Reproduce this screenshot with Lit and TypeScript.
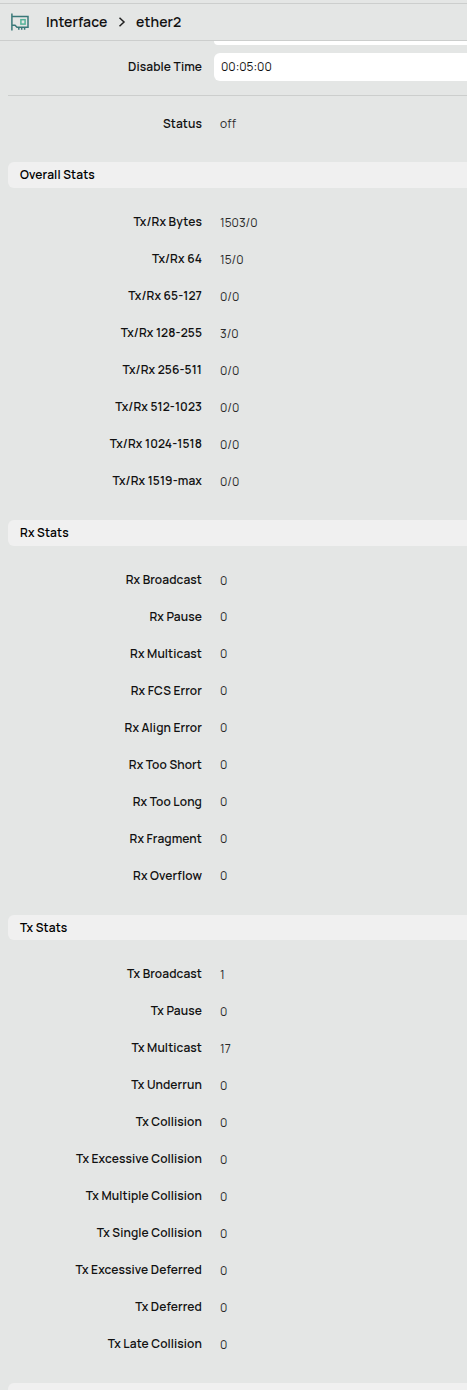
import { LitElement, html, css } from "lit";
import { customElement } from "lit/decorators.js";

type Row = [label: string, value: string];

const sections: { id: string; title: string; rows: Row[] }[] = [
  {
    id: "overall",
    title: "Overall Stats",
    rows: [
      ["Tx/Rx Bytes", "1503/0"],
      ["Tx/Rx 64", "15/0"],
      ["Tx/Rx 65-127", "0/0"],
      ["Tx/Rx 128-255", "3/0"],
      ["Tx/Rx 256-511", "0/0"],
      ["Tx/Rx 512-1023", "0/0"],
      ["Tx/Rx 1024-1518", "0/0"],
      ["Tx/Rx 1519-max", "0/0"],
    ],
  },
  {
    id: "rx",
    title: "Rx Stats",
    rows: [
      ["Rx Broadcast", "0"],
      ["Rx Pause", "0"],
      ["Rx Multicast", "0"],
      ["Rx FCS Error", "0"],
      ["Rx Align Error", "0"],
      ["Rx Too Short", "0"],
      ["Rx Too Long", "0"],
      ["Rx Fragment", "0"],
      ["Rx Overflow", "0"],
    ],
  },
  {
    id: "tx",
    title: "Tx Stats",
    rows: [
      ["Tx Broadcast", "1"],
      ["Tx Pause", "0"],
      ["Tx Multicast", "17"],
      ["Tx Underrun", "0"],
      ["Tx Collision", "0"],
      ["Tx Excessive Collision", "0"],
      ["Tx Multiple Collision", "0"],
      ["Tx Single Collision", "0"],
      ["Tx Excessive Deferred", "0"],
      ["Tx Deferred", "0"],
      ["Tx Late Collision", "0"],
    ],
  },
];

@customElement("app-root")
export class AppRoot extends LitElement {
  static styles = css`
    :host {
      display: block;
      height: 1390px;
      overflow: hidden;
      background: #e4e6e5;
      color: #111;
      font-family: Manrope, Inter, "Open Sans", sans-serif;
      font-size: 12px;
    }
    * {
      box-sizing: border-box;
    }
    .header {
      display: flex;
      align-items: center;
      height: 38px;
      margin-top: 3px;
      padding-left: 10px;
      border-top: 1px solid #cccecd;
      border-bottom: 1px solid #cccecd;
      font-size: 14px;
      font-weight: 600;
      letter-spacing: 0.08px;
    }
    .header span {
      padding-bottom: 2px;
    }
    .card {
      width: 19px;
      height: 18px;
      margin-right: 17px;
    }
    .chevron {
      width: 8px;
      height: 12px;
      margin: 0 10px 0 10.6px;
    }
    .previous {
      height: 4px;
      margin-left: 214px;
      border-radius: 0 0 0 6px;
      background: #fff;
    }
    .field {
      display: flex;
      align-items: center;
      height: 28px;
      margin-top: 8px;
    }
    .label {
      width: 202px;
      padding-bottom: 1px;
      text-align: right;
      font-weight: 600;
      line-height: 17px;
      white-space: nowrap;
      letter-spacing: 0.09px;
    }
    .input {
      flex: 1;
      height: 28px;
      margin-left: 12px;
      padding-left: 7px;
      border-radius: 6px 0 0 6px;
      background: #fff;
      line-height: 28px;
    }
    .status {
      display: flex;
      align-items: flex-start;
      height: 67px;
      margin: 14px 0 0 8px;
      padding-top: 19px;
      border-top: 1px solid #cccecd;
    }
    .status .label {
      width: 194px;
    }
    .value {
      margin-left: 18px;
      color: #2a2a2a;
      line-height: 17px;
    }
    .status .value {
      letter-spacing: 0.2px;
    }
    .title {
      height: 26px;
      margin-left: 8px;
      padding-left: 12px;
      border-radius: 6px 0 0 6px;
      background: #f0f0f0;
      color: #000;
      font-weight: 600;
      line-height: 25px;
      letter-spacing: 0.11px;
    }
    .title.tx {
      height: 25px;
    }
    .rows {
      padding: 16px 0 20px;
    }
    .row {
      display: flex;
      align-items: flex-start;
      height: 37px;
      padding-top: 9px;
    }
    .row .value {
      padding-top: 1px;
    }
    .rx .row + .row .value {
      padding-top: 0;
    }
  `;

  render() {
    return html`
      <div class="header">
        <svg class="card" viewBox="0 0 19 18" fill="none">
          <path d="M1.9 .5V17.5M1.5 3.5H18V14.2H7L5 12.2H1.5" stroke="#397879" stroke-width="1.5" />
          <path d="M8.8 14v2.8M11.7 14v2.8M14.6 14v2.8" stroke="#397879" stroke-width="1.5" />
          <rect x="10.9" y="6.7" width="4.2" height="4.4" stroke="#54b399" stroke-width="1.5" />
        </svg>
        <span>Interface</span>
        <svg class="chevron" viewBox="0 0 8 12" fill="none">
          <path d="M1.5 1.8L6 6L1.5 10.2" stroke="#222" stroke-width="1.5" />
        </svg>
        <span>ether2</span>
      </div>
      <div class="previous"></div>
      <div class="field">
        <div class="label">Disable Time</div>
        <div class="input">00:05:00</div>
      </div>
      <div class="status">
        <div class="label">Status</div>
        <div class="value">off</div>
      </div>
      ${sections.map(
        (s) => html`
          <div class="title ${s.id}">${s.title}</div>
          <div class="rows ${s.id}">
            ${s.rows.map(
              ([label, value]) => html`
                <div class="row">
                  <div class="label">${label}</div>
                  <div class="value">${value}</div>
                </div>
              `
            )}
          </div>
        `
      )}
      <div class="title"></div>
    `;
  }
}
